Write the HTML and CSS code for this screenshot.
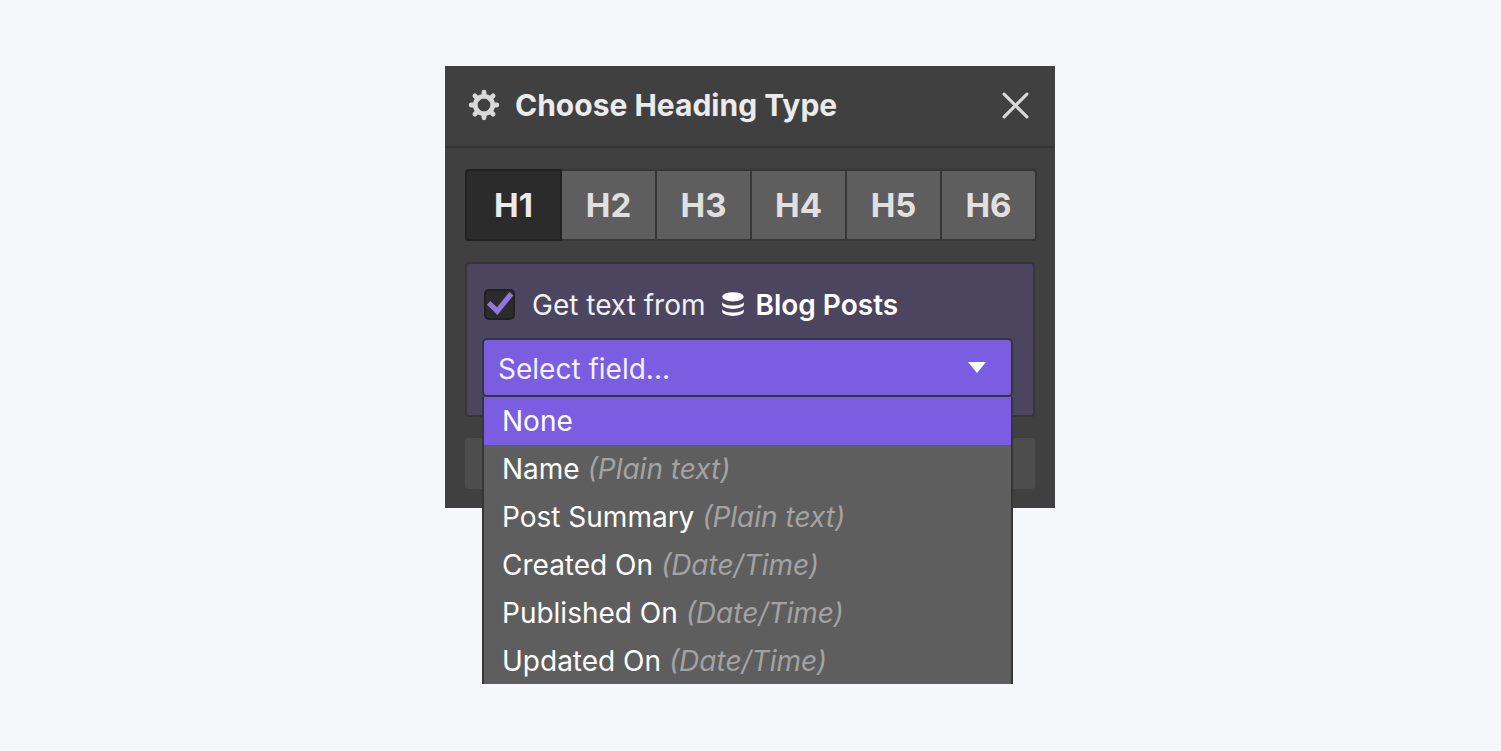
FILE: index.html
```html
<!DOCTYPE html>
<html lang="en">
<head>
<meta charset="utf-8">
<title>Choose Heading Type</title>
<link rel="stylesheet" href="styles.css">
</head>
<body>
<main class="panel">
  <header class="panel-header">
    <svg class="gear" viewBox="0 0 32 32" aria-hidden="true">
      <circle cx="16" cy="16" r="8.800" fill="none" stroke="currentColor" stroke-width="4.600"/>
      <g stroke="currentColor" stroke-width="4.800" stroke-linecap="round">
        <path d="M16 3.200v4M16 24.800v4M3.200 16h4M24.800 16h4M6.900 6.900l3 3M22.100 22.100l3 3M6.900 25.100l3-3M22.100 9.900l3-3"/>
      </g>
    </svg>
    <h1 class="panel-title">Choose Heading Type</h1>
    <button class="close" type="button" aria-label="Close">
      <svg viewBox="0 0 26 26" aria-hidden="true"><path d="M2 2l22 22M24 2L2 24" fill="none" stroke="currentColor" stroke-width="3" stroke-linecap="round"/></svg>
    </button>
  </header>
  <div class="panel-body">
    <div class="levels" role="group" aria-label="Heading level">
      <button class="level level-active" type="button" aria-pressed="true">H1</button>
      <button class="level" type="button">H2</button>
      <button class="level" type="button">H3</button>
      <button class="level" type="button">H4</button>
      <button class="level" type="button">H5</button>
      <button class="level" type="button">H6</button>
    </div>
    <section class="binding">
      <label class="source" for="bind">
        <span class="check">
          <input class="check-input" id="bind" type="checkbox" checked>
          <svg class="check-mark" viewBox="0 0 30 30" aria-hidden="true"><path d="M4.500 13.500l8.300 8L26.500 4.500" fill="none" stroke="currentColor" stroke-width="5"/></svg>
        </span>
        <span class="source-text">Get text from</span>
        <svg class="database" viewBox="0 0 22 24" aria-hidden="true">
          <ellipse cx="11" cy="4.800" rx="10.800" ry="4.600" fill="currentColor"/>
          <path d="M.2 10.300c1.500 2.400 5.800 3.300 10.800 3.300s9.300-.9 10.800-3.300v2.800c-1.200 2.500-5.700 3.800-10.800 3.800S1.400 15.600.2 13.100zM.2 17.300c1.500 2.400 5.800 3.300 10.800 3.300s9.300-.9 10.800-3.300v2.800c-1.200 2.500-5.700 3.800-10.800 3.800S1.400 22.600.2 20.100z" fill="currentColor"/>
        </svg>
        <strong class="source-name">Blog Posts</strong>
      </label>
      <div class="field">
        <select class="field-select" aria-label="Field">
          <option>Select field...</option>
        </select>
        <svg class="caret" viewBox="0 0 18 11" aria-hidden="true"><path d="M0 0h18l-9 11z" fill="currentColor"/></svg>
        <ul class="menu" role="listbox" aria-label="Fields">
          <li class="item item-active" role="option" aria-selected="true">None</li>
          <li class="item" role="option">Name <em class="type">(Plain text)</em></li>
          <li class="item" role="option">Post Summary <em class="type">(Plain text)</em></li>
          <li class="item" role="option">Created On <em class="type">(Date/Time)</em></li>
          <li class="item" role="option">Published On <em class="type">(Date/Time)</em></li>
          <li class="item" role="option">Updated On <em class="type">(Date/Time)</em></li>
        </ul>
      </div>
    </section>
    <div class="footer-bar"></div>
  </div>
</main>
</body>
</html>
```
FILE: styles.css
```css
* {
  box-sizing: border-box;
}

body {
  margin: 0;
  padding: 66px 17px 66px 16px;
  min-height: 100vh;
  background: #f5f7fa;
  color: #fff;
  font-family: Inter, "Liberation Sans", sans-serif;
  font-size: 28px;
}

.panel {
  max-width: 610px;
  margin: 0 auto;
  background: #404040;
}

.panel-header {
  display: flex;
  align-items: center;
  height: 82px;
  padding: 0 26px 2px 23px;
  border-bottom: 2px solid #363636;
  color: #ebebeb;
}

.gear {
  width: 32px;
  height: 32px;
  margin-right: 15px;
  color: #d9d9d9;
}

.panel-title {
  flex: 1;
  margin: 0;
  font-size: 30px;
  font-weight: 700;
  line-height: 40px;
}

.close {
  display: flex;
  padding: 0;
  border: 0;
  background: none;
  color: #d9d9d9;
}

.close svg {
  width: 27px;
  height: 27px;
}

.panel-body {
  padding: 21px 20px 19px;
}

.levels {
  display: flex;
  gap: 2px;
  margin-right: -2px;
  border: 2px solid #363636;
  border-radius: 4px;
  background: #363636;
}

.level {
  flex: 1;
  height: 68px;
  padding: 0;
  border: 0;
  background: #5e5e5e;
  color: #e0e0e0;
  font-family: inherit;
  font-size: 33px;
  font-weight: 700;
}

.level-active {
  border-radius: 2px 0 0 2px;
  background: #2b2b2b;
  color: #ebebeb;
  box-shadow: 0 0 0 2px #212121;
}

.level:last-child {
  border-radius: 0 2px 2px 0;
}

.binding {
  margin-top: 21px;
  padding: 25px 20px 18px 15px;
  border: 2px solid #363636;
  border-radius: 4px;
  background: #4c4560;
}

.source {
  display: flex;
  align-items: center;
  height: 31px;
  margin: 0 0 18px 2px;
}

.check {
  position: relative;
  width: 31px;
  height: 31px;
  margin-right: 17px;
}

.check-input {
  appearance: none;
  display: block;
  width: 100%;
  height: 100%;
  margin: 0;
  border: 2px solid #212121;
  border-radius: 5px;
  background: #2b2b2b;
}

.check-mark {
  position: absolute;
  inset: 0;
  color: #8f75e0;
}

.source-text {
  margin-right: 17px;
  color: #f0f0f4;
}

.database {
  width: 22px;
  height: 24px;
  margin: 0 11px 2px 0;
}

.source-name {
  font-weight: 600;
}

.field {
  position: relative;
}

.field-select {
  appearance: none;
  display: block;
  width: 100%;
  height: 59px;
  padding: 2px 48px 0 14px;
  border: 2px solid #363636;
  border-radius: 5px;
  background: #7a5de0;
  color: #f4f1fd;
  font: inherit;
}

.caret {
  position: absolute;
  top: 24px;
  right: 27px;
  width: 18px;
  height: 11px;
  pointer-events: none;
}

.menu {
  position: absolute;
  top: 100%;
  left: 0;
  right: 0;
  max-height: 287px;
  margin: 0;
  padding: 0;
  overflow: hidden;
  border: solid #363636;
  border-width: 0 2px;
  background: #5e5e5e;
  list-style: none;
}

.item {
  padding: 0 18px;
  line-height: 48px;
  white-space: nowrap;
}

.item-active {
  background: #7a5de0;
}

.type {
  color: #a3a3a3;
}

.footer-bar {
  height: 51px;
  margin-top: 21px;
  border-radius: 4px;
  background: #4d4d4d;
}
```
